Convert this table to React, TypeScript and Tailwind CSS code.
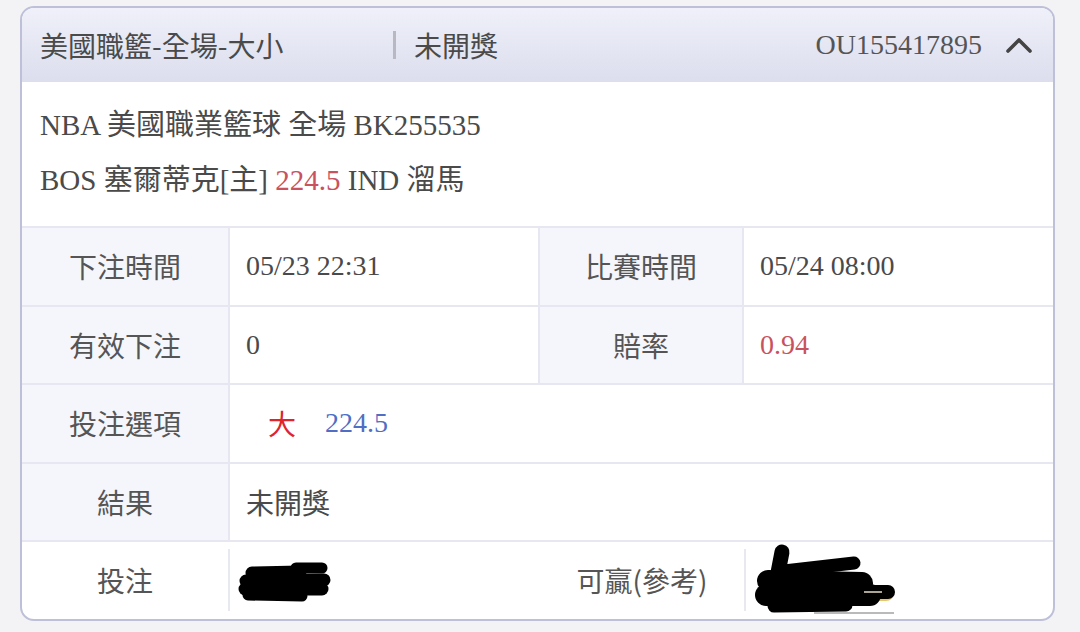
import React from "react";

const SANS = "font-['Noto_Sans_CJK_TC','Noto_Sans',sans-serif]";
const SERIF = "font-['Liberation_Serif','Noto_Sans_CJK_TC',serif]";

function Label({ children, white = false, border = true }: { children: React.ReactNode; white?: boolean; border?: boolean }) {
  return (
    <div
      className={`flex items-center justify-center text-[28px] text-[#555] ${SANS} ${white ? "bg-white" : "bg-[#f5f6fb]"} ${border ? "border-r-2 border-[#e6e7f1]" : ""}`}
    >
      {children}
    </div>
  );
}

function Value({ children, border = false, className = "" }: { children: React.ReactNode; border?: boolean; className?: string }) {
  return (
    <div className={`flex items-center pl-[16px] text-[28px] text-[#4a4a4a] ${SERIF} ${border ? "border-r-2 border-[#e6e7f1]" : ""} ${className}`}>
      {children}
    </div>
  );
}

function Blob1() {
  return (
    <svg width="96" height="46" viewBox="0 0 96 46" className="block">
      <g stroke="#000" strokeLinecap="round" fill="none">
        <path d="M14 14 L62 13" strokeWidth="13" />
        <path d="M58 9 L84 9" strokeWidth="11" />
        <path d="M8 22 L86 21" strokeWidth="13" />
        <path d="M7 30 L84 30" strokeWidth="13" />
        <path d="M10 36 L64 37" strokeWidth="11" />
      </g>
    </svg>
  );
}

function Blob2() {
  return (
    <svg width="146" height="74" viewBox="0 0 146 74" className="block">
      <path d="M100 50 L132 50" stroke="#e8c56a" strokeWidth="16" strokeLinecap="round" />
      <g stroke="#000" strokeLinecap="round" fill="none">
        <path d="M28 9 L22 40" strokeWidth="15" />
        <path d="M30 28 L100 20" strokeWidth="13" />
        <path d="M14 38 L108 40" strokeWidth="22" />
        <path d="M12 52 L116 52" strokeWidth="22" />
        <path d="M98 49 L134 49" strokeWidth="14" />
        <path d="M20 63 L92 62" strokeWidth="13" />
      </g>
      <path d="M110 49 L128 49" stroke="#e6dcc8" strokeWidth="1.5" />
      <path d="M60 70 L140 70" stroke="#777" strokeWidth="1.2" />
    </svg>
  );
}

export default function App() {
  return (
    <div className="min-h-[632px] w-[1080px] bg-[#f3f3f5] pt-[6px] pl-[20px]">
      <div className="w-[1035px] overflow-hidden rounded-[14px] border-2 border-[#bdc0d8] bg-white">
        {/* header */}
        <div className="flex h-[74px] items-center bg-gradient-to-b from-[#eff0f9] to-[#dcdeee] px-[18px]">
          <div className={`w-[353px] text-[28px] text-[#4a4a4a] ${SANS}`}>美國職籃-全場-大小</div>
          <div className="h-[28px] w-[3px] bg-[#b7b8c2]" />
          <div className={`ml-[18px] text-[28px] text-[#4a4a4a] ${SANS}`}>未開獎</div>
          <div className={`ml-auto text-[28px] text-[#555] ${SERIF}`}>OU155417895</div>
          <svg width="28" height="18" viewBox="0 0 28 18" className="ml-[23px] mr-[2px]">
            <path d="M3 15 L14 4 L25 15" stroke="#444" strokeWidth="3.6" fill="none" strokeLinecap="round" strokeLinejoin="round" />
          </svg>
        </div>

        {/* info */}
        <div className={`px-[18px] pt-[16px] pb-[18px] text-[29px] leading-[55px] text-[#4a4a4a] ${SERIF}`}>
          <div>NBA 美國職業籃球 全場 BK255535</div>
          <div>
            BOS 塞爾蒂克[主] <span className="text-[#c9525e]">224.5</span> IND 溜馬
          </div>
        </div>

        {/* table */}
        <div className="grid h-[78.5px] grid-cols-[208px_310px_204px_1fr] border-t-2 border-[#e6e7f1]">
          <Label>下注時間</Label>
          <Value border>05/23 22:31</Value>
          <Label>比賽時間</Label>
          <Value>05/24 08:00</Value>
        </div>
        <div className="grid h-[78.5px] grid-cols-[208px_310px_204px_1fr] border-t-2 border-[#e6e7f1]">
          <Label>有效下注</Label>
          <Value border>0</Value>
          <Label>賠率</Label>
          <Value>
            <span className="text-[#c9525e]">0.94</span>
          </Value>
        </div>
        <div className="grid h-[78.5px] grid-cols-[208px_1fr] border-t-2 border-[#e6e7f1]">
          <Label>投注選項</Label>
          <div className="flex items-center pl-[38px] text-[28px]">
            <span className={`text-[#e0242a] ${SANS}`}>大</span>
            <span className={`ml-[29px] text-[#4f6ec4] ${SERIF}`}>224.5</span>
          </div>
        </div>
        <div className="grid h-[78.5px] grid-cols-[208px_1fr] border-t-2 border-[#e6e7f1]">
          <Label>結果</Label>
          <Value>
            <span className={SANS}>未開獎</span>
          </Value>
        </div>
        <div className="flex h-[78.5px] border-t-2 border-[#e6e7f1]">
          <div className={`flex w-[206px] items-center justify-center text-[28px] text-[#555] ${SANS}`}>投注</div>
          <div className="h-[62px] w-[2px] self-center bg-[#e8e9f0]" />
          <div className="flex w-[310px] items-center pl-[8px] pt-[4px]">
            <Blob1 />
          </div>
          <div className={`flex w-[204px] items-center justify-center text-[28px] text-[#555] ${SANS}`}>可贏(參考)</div>
          <div className="h-[62px] w-[2px] self-center bg-[#e8e9f0]" />
          <div className="flex flex-1 items-center pl-[8px]">
            <Blob2 />
          </div>
        </div>
      </div>
    </div>
  );
}
